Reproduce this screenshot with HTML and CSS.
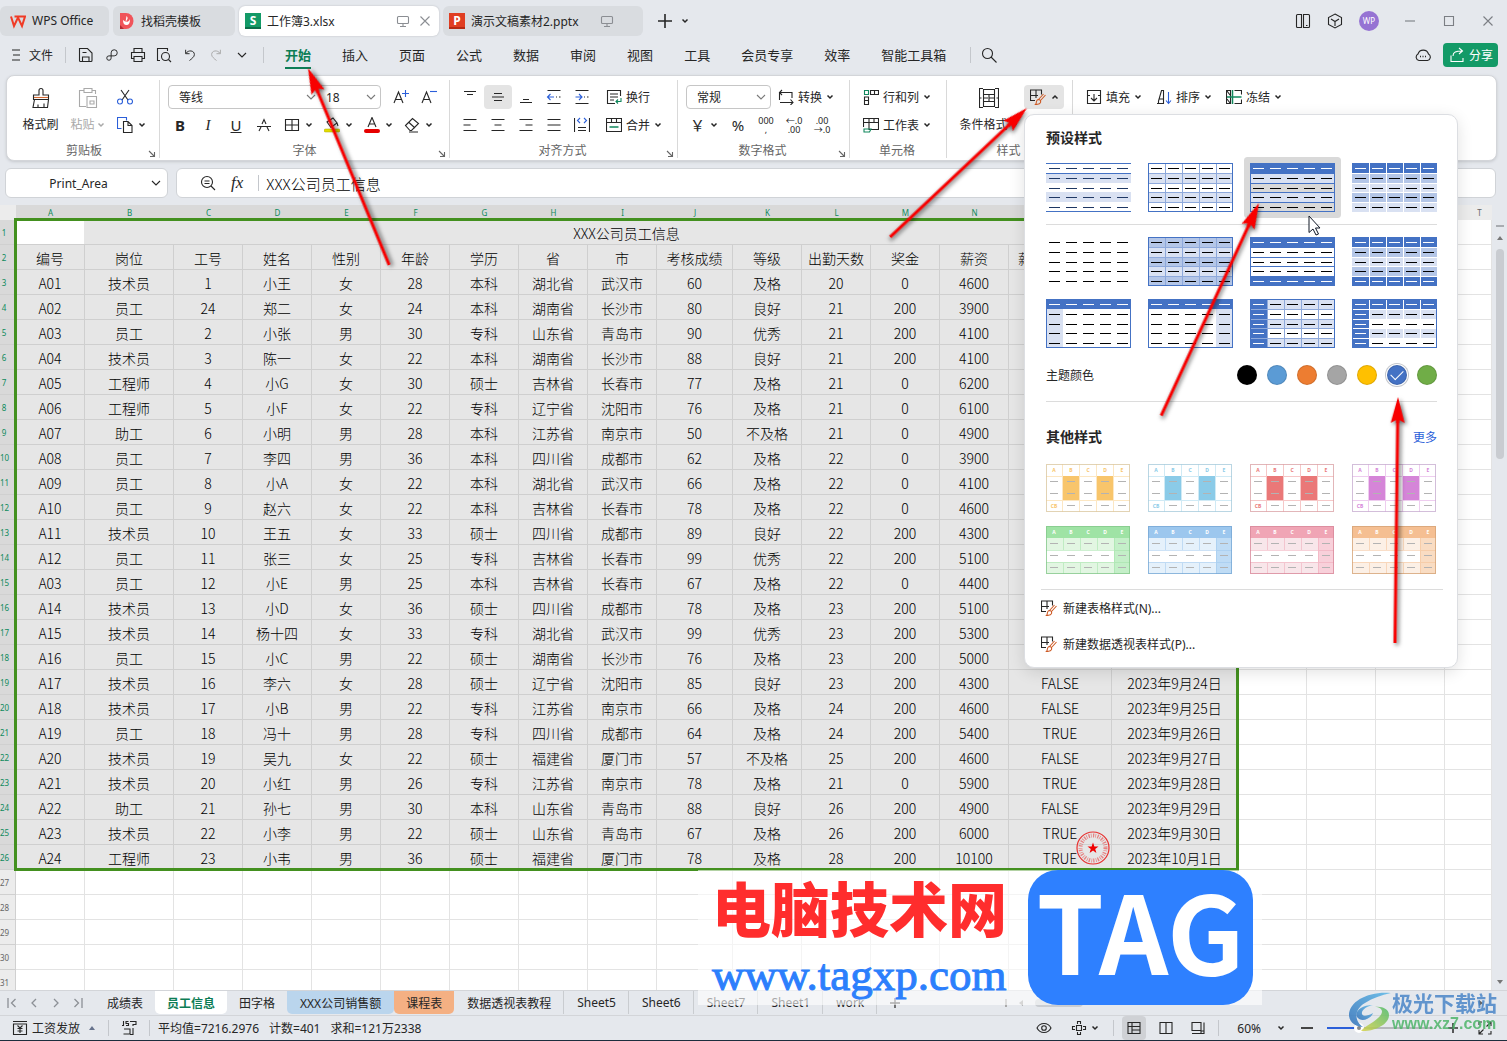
FILE: index.html
```
<!DOCTYPE html>
<html lang="zh-CN">
<head>
    <meta charset="UTF-8">
    <meta name="viewport" content="width=device-width, initial-scale=1.0">
    <title>工作簿3.xlsx</title>
    <link rel="stylesheet" href="styles.css">
</head>
<body>
    <!-- icon sprite -->
    <svg class="sprite" aria-hidden="true">
        <symbol id="caret" viewBox="0 0 8 8"><path d="M1.5 2.5L4 5L6.500 2.500" stroke-width="1.500"/></symbol>
        <symbol id="caret-up" viewBox="0 0 8 8"><path d="M1.500 5.500L4 3L6.500 5.500" stroke-width="1.500"/></symbol>
        <symbol id="chev" viewBox="0 0 10 10"><path d="M1 3L5 7L9 3"/></symbol>
        <symbol id="screen" viewBox="0 0 16 16"><path d="M3.500 3.500h9a1 1 0 0 1 1 1v5a1 1 0 0 1-1 1h-9a1 1 0 0 1-1-1v-5a1 1 0 0 1 1-1zM8 10.500v2.500M5 13.500h6"/></symbol>
        <symbol id="close" viewBox="0 0 16 16"><path d="M3.500 3.500l9 9M12.500 3.500l-9 9"/></symbol>
        <symbol id="plus" viewBox="0 0 16 16"><path d="M8 1v14M1 8h14" stroke-width="1.600"/></symbol>
        <symbol id="panel" viewBox="0 0 16 16"><path d="M6.500 1.500H2.500a1 1 0 0 0-1 1v11a1 1 0 0 0 1 1H6.500M6.500 1v14M8.500 1.500h5a1 1 0 0 1 1 1v11a1 1 0 0 1-1 1h-5zM11 12.500h1.500"/></symbol>
        <symbol id="cube" viewBox="0 0 16 16"><path d="M8 1L14.500 4.500V11.500L8 15L1.500 11.500V4.500zM4 6L8 8.500L12 6M8 8.500V13"/></symbol>
        <symbol id="burger" viewBox="0 0 16 16"><path d="M4 3h8M5 8h7M4 13h8"/></symbol>
        <symbol id="save" viewBox="0 0 16 16"><path d="M1.500 1.500h8l4.500 4.500v7.500a1 1 0 0 1-1 1H2.500a1 1 0 0 1-1-1zM4.500 14v-4h6.500v4M4.500 5.500h4"/></symbol>
        <symbol id="link" viewBox="0 0 16 16"><path d="M7 10.500V5.500a3.500 3.500 0 1 1 3.500 3.500H4.500a2.500 2.500 0 1 0 2.500 2.500z"/></symbol>
        <symbol id="print" viewBox="0 0 16 16"><path d="M4 5V1.500h8V5M4 11.500H1.500v-6h13v6H12M4 9.500h8v5H4z"/></symbol>
        <symbol id="preview" viewBox="0 0 16 16"><path d="M4 13.500H1.500v-12h10V4M12.500 12.500L15 15"/><circle cx="9.500" cy="9.500" r="4"/></symbol>
        <symbol id="undo" viewBox="0 0 16 16"><path d="M3 2v4.500h4.500M3.500 6C6 2 13 2.500 13 7.500c0 3-3 4-5.500 7"/></symbol>
        <symbol id="redo" viewBox="0 0 16 16"><path d="M13 2v4.500H8.500M12.500 6C10 2 3 2.500 3 7.500c0 3 3 4 5.500 7"/></symbol>
        <symbol id="search" viewBox="0 0 16 16"><circle cx="6.500" cy="6.500" r="5"/><path d="M10 10l5.500 5.500"/></symbol>
        <symbol id="cloud" viewBox="0 0 16 16"><path d="M4 13.500a3.500 3.500 0 0 1-1-6.500a5.500 5.500 0 0 1 10.500 0a3.500 3.500 0 0 1-1 6.500z"/><path d="M5 9.500h1M7.500 9.500h1M10 9.500h1" stroke-width="1.600"/></symbol>
        <symbol id="share" viewBox="0 0 16 16"><path d="M2 8.500v6h12v-3.500M4 9c0-4 3-5 9-5M10 1l3.500 3l-3.500 3"/></symbol>
        <symbol id="brush" viewBox="0 0 20 22"><path d="M8 8V3.500a2 2 0 0 1 4 0V8h5.500v4.500H2.500V8zM3.500 12.500L2 20.500h14.500l1-8M7 20.500v-3M13 20.500v-4"/><path d="M3 10.500h14" stroke="#d46a35"/></symbol>
        <symbol id="paste" viewBox="0 0 20 22"><path d="M6 3.500H1.500v16H8M14 3.500h3.500V7M6 1.500h8v4H6zM9 9.500h9.500v11H9zM12 14h4v3h-4z"/></symbol>
        <symbol id="cut" viewBox="0 0 16 16"><path d="M4 1l7 10M12 1L5 11"/><circle cx="3" cy="12.500" r="2.500" stroke="#2b5fd9"/><circle cx="13" cy="12.500" r="2.500" stroke="#2b5fd9"/></symbol>
        <symbol id="copy" viewBox="0 0 16 16"><path d="M4.500 11.500h-4v-11h9v3" stroke="#2b5fd9"/><path d="M6.500 4.500H11l4 4v7H6.500zM11 4.500v4h4"/></symbol>
        <symbol id="strike" viewBox="0 0 16 16"><path d="M1 9.500h14M3 14L5 10M13 14L11 10M6 7L8 2.500L10 7"/></symbol>
        <symbol id="border" viewBox="0 0 16 16"><path d="M1.500 2.500h13v11h-13zM8 2.500v11M1.500 8h13"/></symbol>
        <symbol id="bucket" viewBox="0 0 16 16"><path d="M3 5L9 1l4 5l-6 4.500zM13 6l1 3"/><rect x="0" y="12" width="16" height="3" rx="1.500" fill="#e3de00" stroke="#a8a400" stroke-width=".5"/></symbol>
        <symbol id="color" viewBox="0 0 16 16"><path d="M4 10L8 0.500L12 10M5.500 7h5"/><rect x="0" y="12" width="16" height="4" rx="2" fill="#e60000" stroke="none"/></symbol>
        <symbol id="eraser" viewBox="0 0 16 16"><path d="M1.500 8.500L8.500 1.500L14.500 6.500L7.500 13.500H6zM5 5.500l6 5.500M5 15h9"/></symbol>
        <symbol id="v-top" viewBox="0 0 16 16"><path d="M2 2.500h12M5 5.500h6"/></symbol>
        <symbol id="v-mid" viewBox="0 0 16 16"><path d="M4 4.500h8M2 8h12M4 11.500h8"/></symbol>
        <symbol id="v-bot" viewBox="0 0 16 16"><path d="M5 10.500h6M2 13.500h12"/></symbol>
        <symbol id="dec" viewBox="0 0 16 16"><path d="M1.500 1.500h13M1.500 14.500h13M10 8h1M13 8h1.500"/><path d="M1.500 8H8M4.500 5L1.500 8L4.500 11" stroke="#2b5fd9"/></symbol>
        <symbol id="inc" viewBox="0 0 16 16"><path d="M1.500 1.500h13M1.500 14.500h13M10 8h1M13 8h1.500"/><path d="M1.500 8H8M5 5l3 3l-3 3" stroke="#2b5fd9"/></symbol>
        <symbol id="a-left" viewBox="0 0 16 16"><path d="M1.500 2.500h13M1.500 8h7M1.500 13.500h13"/></symbol>
        <symbol id="a-center" viewBox="0 0 16 16"><path d="M1.500 2.500h13M4.500 8h7M1.500 13.500h13"/></symbol>
        <symbol id="a-right" viewBox="0 0 16 16"><path d="M1.500 2.500h13M7.500 8h7M1.500 13.500h13"/></symbol>
        <symbol id="a-just" viewBox="0 0 16 16"><path d="M1.500 2.500h13M1.500 8h13M1.500 13.500h13"/></symbol>
        <symbol id="spread" viewBox="0 0 16 16"><path d="M.5 1v14M15.500 1v14M4 10.500h8M4 13.500h8"/><path d="M6 1L3.500 3.500L6 6M10 1l2.500 2.500L10 6" stroke="#2b5fd9"/></symbol>
        <symbol id="wrap" viewBox="0 0 16 16"><path d="M9 14.500H1.500v-13h13V7M4 5h8M4 8h8M4 11h4"/><path d="M15 9v3.500h-4.500M12 10.500l-2 2l2 2" stroke="#11875d"/></symbol>
        <symbol id="merge" viewBox="0 0 16 16"><path d="M.5 1.500h15v13H.5zM.5 5.500h15M5.500 1.500v4M10.500 1.500v4"/><path d="M3.500 10h9" stroke="#11875d" stroke-width="1.500"/></symbol>
        <symbol id="convert" viewBox="0 0 16 16"><path d="M1.500 11V3.500H14V9M4 1L1.500 3.500L4 6M2 13.500h13M12.500 10.500l2.500 3l-2.500 2.500"/></symbol>
        <symbol id="rowcol" viewBox="0 0 16 16"><path d="M7.500 1.500h8v4h-8zM11.500 1.500v4M1.500 8h4v7.500h-4zM1.500 11.500h4"/><path d="M1.500 1.500h4v4h-4z" stroke="#11875d"/></symbol>
        <symbol id="sheet" viewBox="0 0 16 16"><path d="M5.500 12.500H15.500V1.500H.5V10M.5 5.500h15M6 1.500v11M11 1.500v4"/><path d="M1 12h7l-1.500 3H1z" stroke="#11875d"/></symbol>
        <symbol id="cond" viewBox="0 0 20 22"><path d="M4 1.500H.5v19H4M16 1.500h3.500v19H16M4.500 2.500h11v5h-11zM4.500 14.500h11v5h-11zM4.500 7.500v7M10 7.500v3.500h5.500M9 11h-4.500M10 11v3.500M15.500 7.500v7M.5 11h2M17.500 11h2"/></symbol>
        <symbol id="tstyle" viewBox="0 0 16 16"><path d="M5 11.500H.5V1h11v4.500M.5 6.500H8M6 1v8"/><path d="M15.500 6l-5 5.500M13.500 5l-5 5.500M8 10.500c2 0 3 1 2.500 3c-.5 1.500-3 2-5 2c1.500-1.500 0-4 2.500-5z" stroke="#cd5a25"/></symbol>
        <symbol id="fill" viewBox="0 0 16 16"><path d="M4 6.500H1.500v-5h13v5H12M1.500 6.500v8h13v-8M8 5v7M5 9l3 3l3-3"/></symbol>
        <symbol id="sort" viewBox="0 0 16 16"><path d="M2.500 14.500V12l3-10.500h2v13zM3 10h4M1 14.500h7"/><path d="M12.500 3v11M10 11.500l2.500 3l2.500-3" stroke="#2b5fd9"/></symbol>
        <symbol id="freeze" viewBox="0 0 16 16"><path d="M.5 1.500h4v13h-4zM1 2l3 4M1 10l3 4M8.500 1.500h7v4M8.500 14.500h7v-4"/><path d="M1 8h14.500M6.500 1v14" stroke="#11875d" stroke-width="1.500"/></symbol>
        <symbol id="launch" viewBox="0 0 8 8"><path d="M1 1l5 5M6.500 2v4.500H2"/></symbol>
        <symbol id="zoomfx" viewBox="0 0 16 16"><circle cx="7" cy="7" r="5.500"/><path d="M4.500 6h5M4.500 8.500h5M11 11l4 4"/></symbol>
        <symbol id="eye" viewBox="0 0 16 16"><path d="M1 8c3-6 11-6 14 0c-3 6-11 6-14 0z"/><circle cx="8" cy="8" r="2.300"/></symbol>
        <symbol id="target" viewBox="0 0 16 16"><path d="M5.500 5.500h5v5h-5zM6.500 4V1.500h3V4M6.500 12v2.500h3V12M4 6.500H1.500v3H4M12 6.500h2.500v3H12"/></symbol>
        <symbol id="normal" viewBox="0 0 16 16"><path d="M2 2.500h12v11H2zM2 6.500h12M6 2.500v11M6 10h8"/></symbol>
        <symbol id="book" viewBox="0 0 16 16"><path d="M2 2.500h12v11H2zM8 2.500v11"/></symbol>
        <symbol id="pages" viewBox="0 0 16 16"><path d="M2 2.500h9v8H2zM14 2.500v11H2M11 13V11h3"/></symbol>
        <symbol id="pay" viewBox="0 0 16 16"><path d="M1 1.500h14M1.500 4h13v10.500h-13zM5.500 5.500L8 8l2.500-2.500M8 8v5M5.500 8.500h5M5.500 11h5"/></symbol>
        <symbol id="macro" viewBox="0 0 16 16"><path d="M2.500 1v4.500H1M7.500 1.500H5v2h2.500v2H5M9 1.500h6v3H12V6M3 9h6v5H2.500M12 8v6.500H9"/></symbol>
        <symbol id="full" viewBox="0 0 16 16"><path d="M9.500 6.500L14 2M10 2h4v4M6.500 9.500L2 14M2 10v4h4M2 5V2h3M11 14h3v-3"/></symbol>
    </svg>

    <div class="app">
        <header class="titlebar">
            <button class="file-tab home-tab">
                <svg class="logo" viewBox="0 0 16 16"><path d="M1 3.500L4 13L8 4.500L12 13L15 3.500H4.500" stroke="#f03b26" stroke-width="2"/></svg>
                WPS Office
            </button>
            <button class="file-tab docer-tab">
                <svg class="logo" viewBox="0 0 16 16"><path d="M1 0h6a7.500 8 0 0 1 0 16H1z" fill="#f0545a" stroke="none"/><path d="M1 12l4 4H1z" fill="#b32b34" stroke="none"/><path d="M7.500 3c3 3-1 4 0 6c1 0 3-1 3.500-3c0 4-1 6-3.500 6S4 10 4 7c1 1 2 1 2.500 2" fill="#fff" stroke="none"/></svg>
                找稻壳模板
            </button>
            <div class="file-tab doc-tab current">
                <span class="badge sheet-badge">S</span>
                <span>工作簿3.xlsx</span>
                <svg class="ico end"><use href="#screen"/></svg>
                <button class="bare" aria-label="关闭"><svg class="ico"><use href="#close"/></svg></button>
            </div>
            <div class="file-tab doc-tab">
                <span class="badge ppt-badge">P</span>
                <span>演示文稿素材2.pptx</span>
                <svg class="ico end"><use href="#screen"/></svg>
                <span class="ico"></span>
            </div>
            <button class="bare new-tab" aria-label="新建"><svg class="ico"><use href="#plus"/></svg><svg class="caret"><use href="#caret"/></svg></button>
            <div class="window-tools">
                <button class="bare" aria-label="侧栏"><svg class="ico"><use href="#panel"/></svg></button>
                <button class="bare" aria-label="应用"><svg class="ico"><use href="#cube"/></svg></button>
                <span class="avatar">WP</span>
                <button class="win-btn" aria-label="最小化"><svg class="ico" viewBox="0 0 16 16"><path d="M3 8h10"/></svg></button>
                <button class="win-btn" aria-label="最大化"><svg class="ico" viewBox="0 0 16 16"><path d="M3.500 3.500h9v9h-9z"/></svg></button>
                <button class="win-btn" aria-label="退出"><svg class="ico"><use href="#close"/></svg></button>
            </div>
        </header>

        <nav class="menubar">
            <button class="bare file-menu"><svg class="ico"><use href="#burger"/></svg>文件</button>
            <span class="bar"></span>
            <div class="quick">
                <button class="bare" aria-label="保存"><svg class="ico"><use href="#save"/></svg></button>
                <button class="bare" aria-label="链接"><svg class="ico small"><use href="#link"/></svg></button>
                <button class="bare" aria-label="打印"><svg class="ico"><use href="#print"/></svg></button>
                <button class="bare" aria-label="预览"><svg class="ico"><use href="#preview"/></svg></button>
                <button class="bare" aria-label="撤销"><svg class="ico small"><use href="#undo"/></svg></button>
                <button class="bare off" aria-label="恢复"><svg class="ico small"><use href="#redo"/></svg></button>
                <button class="bare" aria-label="更多命令"><svg class="chev"><use href="#chev"/></svg></button>
            </div>
            <span class="bar"></span>
            <div class="menu-tabs">
                <a href="#" class="active">开始</a>
                <a href="#">插入</a>
                <a href="#">页面</a>
                <a href="#">公式</a>
                <a href="#">数据</a>
                <a href="#">审阅</a>
                <a href="#">视图</a>
                <a href="#">工具</a>
                <a href="#">会员专享</a>
                <a href="#">效率</a>
                <a href="#">智能工具箱</a>
            </div>
            <span class="bar"></span>
            <button class="bare find" aria-label="搜索"><svg class="ico"><use href="#search"/></svg></button>
            <button class="bare cloud" aria-label="云"><svg class="ico"><use href="#cloud"/></svg></button>
            <button class="share"><svg class="ico"><use href="#share"/></svg>分享</button>
        </nav>

        <section class="ribbon">
            <div class="group clipboard">
                <div class="group-body">
                    <button class="big"><svg class="ico-lg"><use href="#brush"/></svg><span>格式刷</span></button>
                    <button class="big off"><svg class="ico-lg"><use href="#paste"/></svg><span>粘贴<svg class="caret"><use href="#caret"/></svg></span></button>
                    <div class="rows">
                        <div class="row"><button class="slot" aria-label="剪切"><svg class="ico"><use href="#cut"/></svg></button></div>
                        <div class="row"><button class="slot wide" aria-label="复制"><svg class="ico"><use href="#copy"/></svg><svg class="caret"><use href="#caret"/></svg></button></div>
                    </div>
                </div>
                <div class="group-name">剪贴板</div>
                <svg class="launch"><use href="#launch"/></svg>
            </div>

            <div class="group font">
                <div class="rows">
                    <div class="row">
                        <div class="combo">
                            <select class="font-name" aria-label="字体"><option>等线</option></select>
                            <svg class="chev"><use href="#chev"/></svg>
                            <select class="font-size" aria-label="字号"><option>18</option></select>
                            <svg class="chev"><use href="#chev"/></svg>
                        </div>
                        <button class="slot first" aria-label="增大字号"><svg class="ico" viewBox="0 0 16 16"><path d="M1 14L5.500 3L10 14M2.500 10.500h6"/><path d="M12.500 1v7M9 4.500h7" stroke="#2b5fd9"/></svg></button>
                        <button class="slot" aria-label="减小字号"><svg class="ico" viewBox="0 0 16 16"><path d="M1 14L5.500 3L10 14M2.500 10.500h6"/><path d="M9 2.500h7" stroke="#2b5fd9"/></svg></button>
                    </div>
                    <div class="row">
                        <button class="slot glyph"><b>B</b></button>
                        <button class="slot glyph"><i>I</i></button>
                        <button class="slot glyph"><u>U</u></button>
                        <button class="slot" aria-label="删除线"><svg class="ico"><use href="#strike"/></svg></button>
                        <button class="slot wide" aria-label="边框"><svg class="ico"><use href="#border"/></svg><svg class="caret"><use href="#caret"/></svg></button>
                        <button class="slot wide" aria-label="填充色"><svg class="ico"><use href="#bucket"/></svg><svg class="caret"><use href="#caret"/></svg></button>
                        <button class="slot wide" aria-label="字体颜色"><svg class="ico"><use href="#color"/></svg><svg class="caret"><use href="#caret"/></svg></button>
                        <button class="slot wide" aria-label="清除"><svg class="ico"><use href="#eraser"/></svg><svg class="caret"><use href="#caret"/></svg></button>
                    </div>
                </div>
                <div class="group-name">字体</div>
                <svg class="launch"><use href="#launch"/></svg>
            </div>

            <div class="group">
                <div class="rows">
                    <div class="row">
                        <button class="slot" aria-label="顶端对齐"><svg class="ico"><use href="#v-top"/></svg></button>
                        <button class="slot pressed" aria-label="垂直居中"><svg class="ico"><use href="#v-mid"/></svg></button>
                        <button class="slot" aria-label="底端对齐"><svg class="ico"><use href="#v-bot"/></svg></button>
                        <button class="slot" aria-label="减少缩进"><svg class="ico"><use href="#dec"/></svg></button>
                        <button class="slot" aria-label="增加缩进"><svg class="ico"><use href="#inc"/></svg></button>
                        <button class="tbtn"><svg class="ico"><use href="#wrap"/></svg>换行</button>
                    </div>
                    <div class="row">
                        <button class="slot" aria-label="左对齐"><svg class="ico"><use href="#a-left"/></svg></button>
                        <button class="slot" aria-label="居中"><svg class="ico"><use href="#a-center"/></svg></button>
                        <button class="slot" aria-label="右对齐"><svg class="ico"><use href="#a-right"/></svg></button>
                        <button class="slot" aria-label="两端对齐"><svg class="ico"><use href="#a-just"/></svg></button>
                        <button class="slot" aria-label="分散对齐"><svg class="ico"><use href="#spread"/></svg></button>
                        <button class="tbtn"><svg class="ico"><use href="#merge"/></svg>合并<svg class="caret"><use href="#caret"/></svg></button>
                    </div>
                </div>
                <div class="group-name">对齐方式</div>
                <svg class="launch"><use href="#launch"/></svg>
            </div>

            <div class="group">
                <div class="rows">
                    <div class="row">
                        <div class="combo">
                            <select class="num-format" aria-label="数字格式"><option>常规</option></select>
                            <svg class="chev"><use href="#chev"/></svg>
                        </div>
                        <button class="tbtn tight"><svg class="ico"><use href="#convert"/></svg>转换<svg class="caret"><use href="#caret"/></svg></button>
                    </div>
                    <div class="row">
                        <button class="slot wide glyph">￥<svg class="caret"><use href="#caret"/></svg></button>
                        <button class="slot glyph">%</button>
                        <button class="slot tiny"><span>000</span><span>,</span></button>
                        <button class="slot tiny"><span>←.0</span><span>.00</span></button>
                        <button class="slot tiny"><span>.00</span><span>→.0</span></button>
                    </div>
                </div>
                <div class="group-name">数字格式</div>
                <svg class="launch"><use href="#launch"/></svg>
            </div>

            <div class="group">
                <div class="rows">
                    <div class="row"><button class="tbtn tight"><svg class="ico"><use href="#rowcol"/></svg>行和列<svg class="caret"><use href="#caret"/></svg></button></div>
                    <div class="row"><button class="tbtn tight"><svg class="ico"><use href="#sheet"/></svg>工作表<svg class="caret"><use href="#caret"/></svg></button></div>
                </div>
                <div class="group-name">单元格</div>
            </div>

            <div class="group">
                <div class="group-body">
                    <button class="big cond"><svg class="ico-lg"><use href="#cond"/></svg><span>条件格式<svg class="caret"><use href="#caret"/></svg></span></button>
                    <div class="style-drop">
                        <button class="slot wide pressed" aria-label="表格样式"><svg class="ico"><use href="#tstyle"/></svg><svg class="caret"><use href="#caret-up"/></svg></button>

                        <div class="popup">
                            <h3>预设样式</h3>
                            <div class="thumbs" id="recent-styles"></div>
                            <hr>
                            <div class="thumbs" id="preset-styles"></div>
                            <div class="theme-row">
                                <span>主题颜色</span>
                                <div class="swatches">
                                    <input type="radio" name="theme" class="c-black" aria-label="黑色">
                                    <input type="radio" name="theme" class="c-sky" aria-label="浅蓝">
                                    <input type="radio" name="theme" class="c-orange" aria-label="橙色">
                                    <input type="radio" name="theme" class="c-gray" aria-label="灰色">
                                    <input type="radio" name="theme" class="c-gold" aria-label="金色">
                                    <input type="radio" name="theme" class="c-blue" aria-label="蓝色" checked>
                                    <input type="radio" name="theme" class="c-green" aria-label="绿色">
                                </div>
                            </div>
                            <hr>
                            <div class="popup-head">
                                <h3>其他样式</h3>
                                <a href="#">更多</a>
                            </div>
                            <div class="thumbs" id="other-styles"></div>
                            <hr class="wide-line">
                            <button class="popup-item"><svg class="ico"><use href="#tstyle"/></svg>新建表格样式(N)...</button>
                            <button class="popup-item"><svg class="ico"><use href="#tstyle"/></svg>新建数据透视表样式(P)...</button>
                        </div>
                    </div>
                </div>
                <div class="group-name">样式</div>
            </div>

            <div class="group last">
                <div class="rows">
                    <div class="row">
                        <button class="tbtn tight"><svg class="ico"><use href="#fill"/></svg>填充<svg class="caret"><use href="#caret"/></svg></button>
                        <button class="tbtn tight"><svg class="ico"><use href="#sort"/></svg>排序<svg class="caret"><use href="#caret"/></svg></button>
                        <button class="tbtn tight"><svg class="ico"><use href="#freeze"/></svg>冻结<svg class="caret"><use href="#caret"/></svg></button>
                    </div>
                </div>
            </div>
        </section>

        <div class="formula-bar">
            <div class="box name-box">
                <input type="text" value="Print_Area" aria-label="名称框">
                <svg class="chev"><use href="#chev"/></svg>
            </div>
            <div class="box formula-box">
                <svg class="ico"><use href="#zoomfx"/></svg>
                <i class="fx">fx</i>
                <span class="bar"></span>
                <input type="text" value="XXX公司员工信息" aria-label="编辑栏">
            </div>
        </div>

        <main class="workspace">
            <div class="sheet">
                <table class="grid">
                    <colgroup id="cols"></colgroup>
                    <thead><tr id="letters"></tr></thead>
                    <tbody id="cells"></tbody>
                </table>
                <div class="selection"></div>
                <svg class="stamp" viewBox="0 0 34 34">
                    <circle cx="17" cy="17" r="16" stroke="#e8302f" stroke-width="1.200"/>
                    <circle cx="17" cy="17" r="12.500" stroke="#e8302f" stroke-width="4" stroke-dasharray="1.300 1.100 .700 1.400" opacity=".55"/>
                    <path d="M17 11.500l1.400 4h4.100l-3.300 2.500l1.200 4l-3.400-2.400l-3.400 2.400l1.200-4l-3.300-2.500h4.100z" fill="#f00000" stroke="none"/>
                </svg>
            </div>
            <div class="vscroll">
                <span class="split"></span>
                <span class="tri up"></span>
                <span class="thumb-bar"></span>
                <span class="tri down"></span>
            </div>
        </main>

        <div class="sheet-tabs">
            <div class="sheet-nav">
                <svg class="nav-ico" viewBox="0 0 12 12"><path d="M2 1v10M9.500 2L5.500 6L9.500 10"/></svg>
                <svg class="nav-ico" viewBox="0 0 12 12"><path d="M8 2L4 6L8 10"/></svg>
                <svg class="nav-ico" viewBox="0 0 12 12"><path d="M4 2L8 6L4 10"/></svg>
                <svg class="nav-ico" viewBox="0 0 12 12"><path d="M10 1v10M2.500 2L6.500 6L2.500 10"/></svg>
            </div>
            <button>成绩表</button>
            <button class="open">员工信息</button>
            <button>田字格</button>
            <button class="blue">XXX公司销售额</button>
            <button class="peach">课程表</button>
            <button class="lined">数据透视表教程</button>
            <button class="lined">Sheet5</button>
            <button class="lined">Sheet6</button>
            <button class="lined">Sheet7</button>
            <button class="lined">Sheet1</button>
            <button class="lined">work</button>
            <button class="add" aria-label="新建工作表"><svg class="nav-ico dark" viewBox="0 0 12 12"><path d="M6 1v10M1 6h10"/></svg></button>
            <div class="hscroll"><span class="grip"></span><span class="tri left"></span><span class="hbar"></span><span class="tri right"></span></div>
        </div>

        <footer class="statusbar">
            <button class="bare pay"><svg class="ico"><use href="#pay"/></svg>工资发放<span class="tri up"></span></button>
            <span class="bar"></span>
            <svg class="ico macro"><use href="#macro"/></svg>
            <span class="bar"></span>
            <span class="stats"><span>平均值=7216.2976</span><span>计数=401</span><span>求和=121万2338</span></span>
            <div class="views">
                <button class="bare view eye" aria-label="护眼"><svg class="ico"><use href="#eye"/></svg></button>
                <button class="bare view aim" aria-label="阅读"><svg class="ico"><use href="#target"/></svg><svg class="caret"><use href="#caret"/></svg></button>
                <span class="bar"></span>
                <button class="bare view on" aria-label="普通视图"><svg class="ico"><use href="#normal"/></svg></button>
                <button class="bare view" aria-label="分页预览"><svg class="ico"><use href="#book"/></svg></button>
                <button class="bare view" aria-label="页面布局"><svg class="ico"><use href="#pages"/></svg></button>
                <span class="bar"></span>
                <button class="bare zoom">60%<svg class="caret"><use href="#caret"/></svg></button>
                <button class="bare" aria-label="缩小"><svg class="nav-ico dark" viewBox="0 0 12 12"><path d="M0 6h12" stroke-width="1.800"/></svg></button>
                <input type="range" min="0" max="100" value="28" aria-label="缩放">
                <button class="bare" aria-label="放大"><svg class="nav-ico dark" viewBox="0 0 12 12"><path d="M6 1v10M1 6h10" stroke-width="1.600"/></svg></button>
                <button class="bare full" aria-label="全屏"><svg class="ico"><use href="#full"/></svg></button>
            </div>
        </footer>
    </div>

    <!-- site marks -->
    <div class="tag-mark">
        <div class="tag-text">
            <div class="tag-cn">电脑技术网</div>
            <div class="tag-url">www.tagxp.com</div>
        </div>
        <div class="tag-logo">TAG</div>
    </div>
    <div class="xz-mark">
        <svg class="xz-logo" viewBox="0 0 42 40">
            <defs>
                <linearGradient id="swirlA" x1="0" y1="1" x2="1" y2="0"><stop offset="0" stop-color="#2f6fb8"/><stop offset="1" stop-color="#5bb8e8"/></linearGradient>
                <linearGradient id="swirlB" x1="0" y1="1" x2="1" y2="0"><stop offset="0" stop-color="#d8d34a"/><stop offset="1" stop-color="#4dbb6a"/></linearGradient>
            </defs>
            <path d="M42 1C20-1 0 9 0 23c0 8 8 12 14 12C6 30 4 18 16 11C24 6 32 3 42 1z" fill="url(#swirlA)" stroke="none"/>
            <path d="M24 13c-12 0-19 7-16 12c4 6 14 2 16-4c-5 3-10 4-11 1c-1-4 5-8 11-9z" fill="url(#swirlA)" stroke="none"/>
            <path d="M26 15c7 0 10 5 3 11C24 31 16 34 12 39C24 40 40 33 40 23c0-6-7-9-14-8z" fill="url(#swirlB)" stroke="none"/>
        </svg>
        <div>
            <div class="xz-cn">极光下载站</div>
            <div class="xz-url">www.xz7.com</div>
        </div>
    </div>

    <!-- pointers drawn over the window -->
    <svg class="arrows" aria-hidden="true">
        <defs><path id="head" d="M0 0L7 26L1.500 23V26H-1.500V23L-7 26z"/></defs>
        <g transform="translate(308 68) rotate(-22.400)"><use href="#head"/><path d="M0 22V213"/></g>
        <g transform="translate(1027 108) rotate(46.700)"><use href="#head"/><path d="M0 22V188"/></g>
        <g transform="translate(1259 203) rotate(24.700)"><use href="#head"/><path d="M0 22V234"/></g>
        <g transform="translate(1398 397) rotate(.7)"><use href="#head"/><path d="M0 22V246"/></g>
        <path class="mouse" d="M1309 216V232.500L1313 229L1316 235L1318.500 234L1315.500 228H1320z"/>
    </svg>

    <script src="script.js"></script>
</body>
</html>
```

FILE: styles.css
```
* {
    box-sizing: border-box;
}

body {
    margin: 0;
    font-family: "Noto Sans", "Noto Sans CJK SC", sans-serif;
    font-size: 12px;
    color: #262626;
    background-color: #e5e8ed;
    overflow: hidden;
}

button,
input,
select {
    font: inherit;
    color: inherit;
}

button {
    border: none;
    background: none;
    padding: 0;
    display: flex;
    align-items: center;
    white-space: nowrap;
}

svg {
    fill: none;
    stroke: currentColor;
    stroke-width: 1.1;
    flex: none;
}

.sprite {
    position: absolute;
    width: 0;
    height: 0;
}

.ico {
    width: 16px;
    height: 16px;
}

.ico.small {
    width: 14px;
    height: 14px;
}

.ico-lg {
    width: 20px;
    height: 22px;
}

.caret {
    width: 8px;
    height: 8px;
}

.chev {
    width: 10px;
    height: 10px;
}

.bar {
    width: 1px;
    height: 16px;
    background-color: #c4c7cc;
}

.off {
    color: #a9a9a9;
}

.app {
    height: 100vh;
    display: flex;
    flex-direction: column;
    border-bottom: 1px solid #1d2d3d;
}

/* title bar */
.titlebar {
    height: 41px;
    flex: none;
    display: flex;
    align-items: center;
    gap: 4px;
}

.file-tab {
    height: 30px;
    display: flex;
    align-items: center;
    gap: 6px;
    padding: 0 6px;
    border-radius: 6px;
    background-color: #d9dce0;
}

.home-tab {
    width: 109px;
    padding-left: 10px;
}

.docer-tab {
    width: 122px;
}

.doc-tab {
    width: 200px;
}

.current {
    background-color: #fff;
    box-shadow: 0 0 2px #b5b8bd;
}

.logo {
    width: 16px;
    height: 16px;
}

.badge {
    width: 16px;
    height: 16px;
    line-height: 15px;
    text-align: center;
    font-size: 12px;
    font-weight: bold;
    color: #fff;
}

.sheet-badge {
    background-color: #139a67;
    border-bottom: 2px solid #0a6e49;
}

.ppt-badge {
    background-color: #e03e22;
    border-bottom: 2px solid #b62a13;
}

.end {
    margin-left: auto;
    color: #8b8e93;
}

.current .bare {
    color: #8b8e93;
}

.new-tab {
    gap: 8px;
    padding-left: 10px;
}

.window-tools {
    margin-left: auto;
    display: flex;
    align-items: center;
    gap: 16px;
    padding-right: 11px;
}

.avatar {
    width: 20px;
    height: 20px;
    line-height: 20px;
    border-radius: 50%;
    background-color: #9673d3;
    color: #fff;
    font-size: 8px;
    text-align: center;
}

.win-btn {
    color: #7b7e84;
    padding-left: 7px;
}

/* menu bar */
.menubar {
    height: 34px;
    flex: none;
    display: flex;
    align-items: center;
    padding: 0 9px 6px 8px;
}

.file-menu {
    gap: 5px;
    margin-right: 12px;
}

.quick {
    display: flex;
    padding: 0 8px 0 7px;
}

.quick button {
    width: 26px;
    justify-content: center;
}

.menu-tabs {
    display: flex;
    gap: 31px;
    padding: 0 24px 0 21px;
    font-size: 13px;
}

.menu-tabs a {
    color: #262626;
    text-decoration: none;
    line-height: 24px;
    border-bottom: 2px solid transparent;
    padding-top: 2px;
}

.menu-tabs .active {
    color: #0d7d55;
    font-weight: bold;
    border-color: #0d7d55;
}

.find {
    margin-left: 10px;
}

.cloud {
    margin-left: auto;
    margin-right: 12px;
}

.share {
    height: 24px;
    gap: 4px;
    padding: 0 5px 0 6px;
    border-radius: 4px;
    background-color: #139a67;
    color: #fff;
}

/* ribbon */
.ribbon {
    height: 86px;
    flex: none;
    display: flex;
    margin: 0 10px 0 6px;
    padding-top: 4px;
    background-color: #fff;
    border: 1px solid #d3d5d9;
    border-radius: 8px;
    box-shadow: 0 1px 3px #c5c8cd;
}

.group {
    position: relative;
    height: 78px;
    padding: 5px 8px 0 6px;
    border-right: 1px solid #d9d9d9;
}

.group.clipboard {
    padding-left: 10px;
}

.group.font {
    padding-right: 6px;
}

.group.last {
    border-right: none;
}

.group-body {
    display: flex;
    height: 52px;
}

.rows {
    display: flex;
    flex-direction: column;
    gap: 4px;
    height: 52px;
}

.row {
    display: flex;
    align-items: center;
    height: 24px;
}

.group-name {
    margin-top: 6px;
    line-height: 16px;
    text-align: center;
    color: #666;
}

.launch {
    position: absolute;
    right: 3px;
    bottom: 0;
    width: 8px;
    height: 8px;
    color: #666;
}

.slot {
    width: 28px;
    height: 24px;
    justify-content: center;
}

.wide {
    width: 40px;
    gap: 5px;
    justify-content: flex-start;
    padding-left: 6px;
}

.pressed {
    background-color: #e4e4e4;
    border-radius: 4px;
}

.first {
    margin-left: 6px;
}

.glyph {
    font-size: 15px;
    line-height: 24px;
}

.glyph i {
    font-family: "Liberation Serif", serif;
}

.tiny {
    flex-direction: column;
    font-size: 9px;
    line-height: 9px;
}

.tbtn {
    height: 24px;
    gap: 4px;
    margin-left: 3px;
    padding: 0 7px;
}

.tight {
    margin-left: 0;
}

.big {
    width: 47px;
    flex-direction: column;
    padding-top: 2px;
}

.big span {
    display: flex;
    align-items: center;
    gap: 2px;
    margin-top: 7px;
    line-height: 18px;
}

.cond {
    width: 71px;
}

.combo {
    display: flex;
    align-items: center;
    height: 24px;
    margin-left: 2px;
    padding-right: 4px;
    border: 1px solid #c6c6c6;
    border-radius: 4px;
}

.combo select {
    appearance: none;
    border: none;
    background: none;
    padding: 0 0 0 10px;
}

.combo .chev {
    color: #7a7a7a;
}

.font-name {
    width: 137px;
}

.font-size {
    width: 50px;
}

.num-format {
    width: 69px;
}

/* table style popup */
.style-drop {
    position: relative;
}

.popup {
    position: absolute;
    top: 29px;
    left: 0;
    z-index: 10;
    width: 434px;
    padding: 13px 20px 5px 21px;
    background-color: #fff;
    border: 1px solid #dcdee2;
    border-radius: 10px;
    box-shadow: 0 4px 16px rgba(0, 0, 0, 0.12);
}

.popup h3 {
    margin: 0;
    font-size: 14px;
    line-height: 20px;
}

.popup hr {
    height: 1px;
    margin: 12px 0;
    border: none;
    background-color: #dcdcdc;
}

.thumbs {
    display: grid;
    grid-template-columns: repeat(4, 85px);
    justify-content: space-between;
    row-gap: 13px;
}

.popup h3 + .thumbs {
    margin-top: 15px;
}

.thumb svg {
    display: block;
    width: 85px;
    height: 49px;
    stroke: none;
    shape-rendering: crispEdges;
}

.thumb.chosen {
    background-color: #d9d9d9;
    border-radius: 1px;
    box-shadow: 0 0 0 6px #d9d9d9;
}

.thumb text {
    font-size: 5px;
    font-weight: bold;
    text-anchor: middle;
}

.theme-row {
    display: flex;
    align-items: center;
    justify-content: space-between;
    margin: 17px 0 16px;
}

.swatches {
    display: flex;
    gap: 10px;
}

.swatches input {
    appearance: none;
    width: 20px;
    height: 20px;
    margin: 0;
    border-radius: 50%;
    border: 1px solid rgba(0, 0, 0, 0.12);
}

.swatches input:checked {
    box-shadow: 0 0 0 1px #fff, 0 0 0 2px #c4c7cc;
}

.swatches input:checked::after {
    content: "";
    display: block;
    width: 11px;
    height: 6px;
    margin: 4px 0 0 3px;
    border-left: 1px solid #fff;
    border-bottom: 1px solid #fff;
    transform: rotate(-45deg);
}

.c-black { background-color: #000; }
.c-sky { background-color: #5b9bd5; }
.c-orange { background-color: #ed7d31; }
.c-gray { background-color: #a5a5a5; }
.c-gold { background-color: #ffc000; }
.c-blue { background-color: #4472c4; }
.c-green { background-color: #70ad47; }

.popup-head {
    display: flex;
    justify-content: space-between;
    align-items: center;
    margin: 25px 0 17px;
}

.popup-head a {
    color: #2b5fd9;
    text-decoration: none;
}

.popup .wide-line {
    margin: 14px -6px 0 -5px;
}

.popup-item {
    height: 36px;
    gap: 6px;
    margin-left: -5px;
}

/* formula bar */
.formula-bar {
    display: flex;
    flex: none;
    gap: 8px;
    height: 44px;
    padding: 7px 11px 7px 5px;
}

.box {
    display: flex;
    align-items: center;
    background-color: #fff;
    border: 1px solid #d0d3d7;
    border-radius: 6px;
}

.box input {
    border: none;
    outline: none;
    background: none;
    padding: 0;
    min-width: 0;
}

.name-box {
    width: 163px;
    padding-right: 6px;
}

.name-box input {
    flex: 1;
    text-align: center;
}

.formula-box {
    flex: 1;
    gap: 15px;
    padding-left: 23px;
}

.formula-box .bar {
    margin-right: -8px;
}

.fx {
    font-family: "Liberation Serif", serif;
    font-size: 17px;
}

.formula-box input {
    flex: 1;
    font-family: "Noto Sans CJK SC", sans-serif;
    font-size: 15px;
    font-weight: 300;
    color: #000;
}

/* grid */
.workspace {
    flex: 1;
    min-height: 0;
    display: flex;
}

.sheet {
    flex: 1;
    position: relative;
    overflow: hidden;
    background-color: #fff;
}

.grid {
    width: 100%;
    table-layout: fixed;
    border-spacing: 0;
}

.grid th,
.grid td {
    padding: 0;
    overflow: hidden;
    white-space: nowrap;
    text-align: center;
}

.grid thead th {
    height: 15px;
    line-height: 15px;
    font-size: 8px;
    font-weight: normal;
    background-color: #ececec;
    color: #666;
}

.grid thead th:last-child {
    padding-left: 22px;
}

.grid tbody th {
    height: 25px;
    padding-right: 7px;
    font-size: 8px;
    font-weight: normal;
    color: #666;
    background-color: #ececec;
    border-right: 1px solid #d0d0d0;
    border-bottom: 1px solid #d0d0d0;
    overflow: visible;
}

.grid thead .in,
.grid tbody th.in {
    background-color: #d9d9d9;
    color: #0d8a5c;
}

.grid td {
    height: 25px;
    padding-top: 3px;
    line-height: 21px;
    font-family: "Noto Sans CJK SC", sans-serif;
    font-size: 14px;
    font-weight: 300;
    color: #000;
    border-right: 1px solid #e3e3e3;
    border-bottom: 1px solid #e3e3e3;
}

.grid td.in {
    background-color: #e6e6e6;
    border-color: #cfcfcf;
}

.grid td.heading {
    background-image: linear-gradient(to right, #fff 68px, #e6e6e6 68px);
}

.selection {
    position: absolute;
    left: 14px;
    top: 13px;
    width: 1225px;
    height: 653px;
    border: 3px solid #43901f;
}

.stamp {
    position: absolute;
    left: 1076px;
    top: 626px;
    width: 34px;
    height: 34px;
}

.vscroll {
    width: 15px;
    display: flex;
    flex-direction: column;
    align-items: center;
    padding: 20px 0 6px;
}

.split {
    width: 8px;
    height: 2px;
    background-color: #a9acb1;
}

.tri {
    width: 0;
    height: 0;
    border: 3px solid transparent;
}

.tri.up {
    border-bottom: 4px solid #777;
    border-top: none;
}

.tri.down {
    margin-top: auto;
    border-top: 4px solid #777;
    border-bottom: none;
}

.tri.left {
    border-right: 4px solid #999;
    border-left: none;
}

.tri.right {
    margin-left: auto;
    border-left: 4px solid #666;
    border-right: none;
}

.vscroll .up {
    margin: 9px 0;
}

.thumb-bar {
    width: 8px;
    height: 210px;
    border-radius: 4px;
    background-color: #c9ccd1;
}

/* sheet tabs */
.sheet-tabs {
    display: flex;
    flex: none;
    height: 26px;
    padding-left: 6px;
    border-top: 1px solid #d3d5d9;
    border-bottom: 1px solid #d3d5d9;
}

.nav-ico {
    width: 12px;
    height: 12px;
    color: #8c9096;
    stroke-width: 1.3;
}

.nav-ico.dark {
    color: #333;
}

.sheet-nav {
    display: flex;
    align-items: center;
    gap: 10px;
    margin-right: 11px;
}

.sheet-tabs button {
    height: 23px;
    padding: 0 12px;
}

.sheet-tabs .open {
    background-color: #fff;
    color: #0d7d55;
    font-weight: bold;
    border-radius: 0 0 5px 5px;
}

.sheet-tabs .blue {
    padding: 0 13px;
    background-color: #bad5ed;
    border-radius: 0 0 5px 5px;
}

.sheet-tabs .peach {
    background-color: #f4b083;
    border-radius: 0 0 5px 5px;
}

.sheet-tabs .lined {
    padding-left: 13px;
    border-right: 1px solid #c9ccd0;
}

.hscroll {
    flex: 1;
    display: flex;
    align-items: center;
    gap: 12px;
    margin-left: 92px;
    padding-right: 24px;
}

.grip {
    width: 2px;
    height: 8px;
    background-color: #aaa;
}

.hbar {
    width: 48px;
    height: 8px;
    border-radius: 4px;
    background-color: #c9ccd1;
}

/* status bar */
.statusbar {
    height: 24px;
    flex: none;
    display: flex;
    align-items: center;
    padding-left: 12px;
}

.pay {
    gap: 4px;
    margin-right: 13px;
}

.pay .tri {
    margin-left: 5px;
    border-bottom-color: #66728c;
}

.macro {
    margin: 0 12px;
}

.stats {
    display: flex;
    gap: 10px;
    margin-left: 8px;
}

.views {
    display: flex;
    align-items: center;
    gap: 8px;
    margin-left: auto;
    padding-right: 14px;
}

.view {
    width: 24px;
    height: 24px;
    justify-content: center;
}

.eye {
    margin-right: 4px;
}

.aim {
    width: 34px;
    gap: 4px;
    margin-right: 3px;
}

.view.on {
    background-color: #cfd1d5;
    border-radius: 4px;
}

.zoom {
    gap: 16px;
    margin: 0 8px 0 10px;
}

.views input {
    appearance: none;
    width: 106px;
    height: 2px;
    margin: 0 6px;
    background: linear-gradient(to right, #2b5fd9 28%, #b5b7bb 28%);
}

.views input::-webkit-slider-thumb {
    appearance: none;
    width: 10px;
    height: 10px;
    border-radius: 50%;
    border: 3px solid #fff;
    background-color: #888;
}

.full {
    margin-left: 10px;
}

/* site marks */
.tag-mark {
    position: absolute;
    left: 698px;
    top: 870px;
    display: flex;
    justify-content: space-between;
    width: 564px;
    height: 135px;
    padding: 0 9px 0 14px;
    background-color: rgba(255, 255, 255, 0.6);
}

.tag-cn {
    font-size: 59px;
    line-height: 78px;
    font-weight: 900;
    color: #ff2d2d;
}

.tag-url {
    font-family: "Liberation Serif", serif;
    font-size: 45px;
    line-height: 54px;
    color: #2c7ffc;
    -webkit-text-stroke: 1px #2c7ffc;
}

.tag-logo {
    width: 225px;
    border-radius: 30px;
    background-color: #2e80ff;
    color: #fff;
    font-family: "Noto Sans CJK SC", sans-serif;
    font-size: 108px;
    font-weight: bold;
    line-height: 116px;
    text-align: center;
}

.xz-mark {
    position: absolute;
    right: 10px;
    bottom: 8px;
    display: flex;
    align-items: center;
    gap: 1px;
    opacity: 0.85;
}

.xz-logo {
    width: 42px;
    height: 40px;
}

.xz-cn {
    font-size: 21px;
    line-height: 24px;
    font-weight: bold;
    color: #4a86c8;
}

.xz-url {
    font-family: "Liberation Sans", sans-serif;
    font-size: 16px;
    line-height: 18px;
    font-weight: bold;
    color: #4fb56a;
}

.arrows {
    position: absolute;
    left: 0;
    top: 0;
    width: 100%;
    height: 100%;
    z-index: 20;
    pointer-events: none;
    fill: #f80000;
    stroke: #f80000;
    stroke-width: 3;
}

.arrows g {
    filter: drop-shadow(2px 2px 2px rgba(0, 0, 0, 0.6));
}

.arrows use {
    stroke-width: 0;
}

.arrows .mouse {
    fill: #fff;
    stroke: #111827;
    stroke-width: 1;
}
```

FILE: script.js
```
var letters = 'ABCDEFGHIJKLMNOPQRST'.split('');
var widths = [69, 89, 69, 69, 69, 69, 69, 69, 69, 76, 69, 69, 69, 69, 103, 126, 69, 69, 69, 0];
var selectedCols = 16;
var selectedRows = 26;

var rows = [
    '编号 岗位 工号 姓名 性别 年龄 学历 省 市 考核成绩 等级 出勤天数 奖金 薪资 薪资是否达标',
    'A01 技术员 1 小王 女 28 本科 湖北省 武汉市 60 及格 20 0 4600',
    'A02 员工 24 郑二 女 24 本科 湖南省 长沙市 80 良好 21 200 3900',
    'A03 员工 2 小张 男 30 专科 山东省 青岛市 90 优秀 21 200 4100',
    'A04 技术员 3 陈一 女 22 本科 湖南省 长沙市 88 良好 21 200 4100',
    'A05 工程师 4 小G 女 30 硕士 吉林省 长春市 77 及格 21 0 6200',
    'A06 工程师 5 小F 女 22 专科 辽宁省 沈阳市 76 及格 21 0 6100',
    'A07 助工 6 小明 男 28 本科 江苏省 南京市 50 不及格 21 0 4900',
    'A08 员工 7 李四 男 36 本科 四川省 成都市 62 及格 22 0 3900',
    'A09 员工 8 小A 女 22 本科 湖北省 武汉市 66 及格 22 0 4100',
    'A10 员工 9 赵六 女 22 本科 吉林省 长春市 78 及格 22 0 4600',
    'A11 技术员 10 王五 女 33 硕士 四川省 成都市 89 良好 22 200 4300',
    'A12 员工 11 张三 女 25 专科 吉林省 长春市 99 优秀 22 200 5100',
    'A03 员工 12 小E 男 25 本科 吉林省 长春市 67 及格 22 0 4400',
    'A14 技术员 13 小D 女 36 硕士 四川省 成都市 78 及格 23 200 5100',
    'A15 技术员 14 杨十四 女 33 专科 湖北省 武汉市 99 优秀 23 200 5300',
    'A16 员工 15 小C 男 22 硕士 湖南省 长沙市 76 及格 23 200 5000',
    'A17 技术员 16 李六 女 28 硕士 辽宁省 沈阳市 85 良好 23 200 4300 FALSE 2023年9月24日',
    'A18 技术员 17 小B 男 22 专科 江苏省 南京市 66 及格 24 200 4600 FALSE 2023年9月25日',
    'A19 员工 18 冯十 男 28 专科 四川省 成都市 64 及格 24 200 5400 TRUE 2023年9月26日',
    'A20 技术员 19 吴九 女 22 硕士 福建省 厦门市 57 不及格 25 200 4600 FALSE 2023年9月27日',
    'A21 技术员 20 小红 男 26 专科 江苏省 南京市 78 及格 21 0 5900 TRUE 2023年9月28日',
    'A22 助工 21 孙七 男 30 本科 山东省 青岛市 88 良好 26 200 4900 FALSE 2023年9月29日',
    'A23 技术员 22 小李 男 22 硕士 山东省 青岛市 67 及格 26 200 6000 TRUE 2023年9月30日',
    'A24 工程师 23 小韦 男 36 硕士 福建省 厦门市 78 及格 28 200 10100 TRUE 2023年10月1日'
];

function buildGrid() {
    var cols = '<col style="width:16px">';
    var head = '<th></th>';
    letters.forEach(function (letter, i) {
        cols += widths[i] ? '<col style="width:' + widths[i] + 'px">' : '<col>';
        head += '<th class="' + (i < selectedCols ? 'in' : '') + '">' + letter + '</th>';
    });
    document.getElementById('cols').innerHTML = cols;
    document.getElementById('letters').innerHTML = head;

    var body = '';
    for (var r = 1; r <= 31; r++) {
        var inRow = r <= selectedRows;
        body += '<tr><th class="' + (inRow ? 'in' : '') + '">' + r + '</th>';
        var first = 0;
        if (r === 1) {
            body += '<td class="in heading" colspan="16">XXX公司员工信息</td>';
            first = selectedCols;
        }
        var values = r > 1 && rows[r - 2] ? rows[r - 2].split(' ') : [];
        for (var c = first; c < letters.length; c++) {
            body += '<td class="' + (inRow && c < selectedCols ? 'in' : '') + '">' + (values[c] || '') + '</td>';
        }
        body += '</tr>';
    }
    document.getElementById('cells').innerHTML = body;
}

// thumbnails
var BLUE = '#4472c4', MID = '#b4c6e7', LIGHT = '#d9e1f2', LINE = '#8ea9db';
var X = [0, 17, 34, 51, 68, 85];
var Y = [0, 10, 20, 29, 39, 49];

function rect(x, y, w, h, fill) {
    return '<rect x="' + x + '" y="' + y + '" width="' + w + '" height="' + h + '" fill="' + fill + '"/>';
}

function frame(w, h, color) {
    return rect(0, 0, w, 1, color) + rect(0, h - 1, w, 1, color) + rect(0, 0, 1, h, color) + rect(w - 1, 0, 1, h, color);
}

// fills: one string per row, b = blue, m = mid, l = light, . = none
function presetThumb(t) {
    var shade = { b: BLUE, m: MID, l: LIGHT };
    var out = '';
    var r, c, key;
    for (r = 0; r < 5; r++) {
        for (c = 0; c < 5; c++) {
            key = t.fills[r][c];
            if (shade[key]) {
                out += rect(X[c], Y[r], X[c + 1] - X[c], Y[r + 1] - Y[r], shade[key]);
            }
        }
    }
    (t.h || []).forEach(function (i) { out += rect(0, Math.min(Y[i], 48), 85, 1, t.hColor || BLUE); });
    (t.v || []).forEach(function (i) { out += rect(X[i], 0, 1, 49, t.vColor || LINE); });
    if (t.frame) {
        out += frame(85, 49, BLUE);
    }
    for (r = 0; r < 5; r++) {
        for (c = 0; c < 5; c++) {
            out += rect(X[c] + 3, Y[r] + 5, 11, 1, t.fills[r][c] === 'b' ? '#fff' : (t.dash || '#000'));
        }
    }
    return '<button class="thumb' + (t.chosen ? ' chosen' : '') + '"><svg viewBox="0 0 85 49">' + out + '</svg></button>';
}

function otherThumb(t) {
    var out = rect(0, 0, 84, 48, '#fff');
    var r, c;
    if (t.banded) {
        out += rect(0, 0, 84, 12, t.main) + rect(0, 12, 68, 12, t.soft) + rect(0, 36, 68, 12, t.soft) + rect(68, 12, 16, 36, t.side);
        out += '<g opacity=".5">' + rect(68, 0, 1, 48, t.main) + rect(0, 24, 84, 1, t.main) + rect(0, 36, 84, 1, t.main);
        for (c = 1; c < 4; c++) {
            out += rect(c * 17, 12, 1, 12, t.main) + rect(c * 17, 36, 1, 12, t.main);
        }
        out += '</g>';
    } else {
        out += '<g opacity=".4">' + rect(0, 12, 84, 1, t.main) + rect(0, 36, 84, 1, t.main);
        for (c = 1; c < 5; c++) {
            out += rect(c * 17 - 1, 0, 1, 48, t.main);
        }
        out += '</g>' + rect(17, 12, 16, 24, t.main) + rect(51, 12, 16, 24, t.main);
    }
    out += '<g opacity=".8">' + frame(84, 48, t.edge) + '</g>';
    'ABCDE'.split('').forEach(function (ch, i) {
        out += '<text x="' + (i * 17 + 8) + '" y="8" fill="' + (t.banded ? '#fff' : t.main) + '">' + ch + '</text>';
    });
    for (r = 1; r < 4; r++) {
        for (c = 0; c < 5; c++) {
            if (!t.banded && r === 3 && c === 0) {
                out += '<text x="8" y="44" fill="' + t.main + '">CB</text>';
            } else {
                out += rect(c * 17 + 4, r * 12 + 5, 8, 1, '#b3b3b3');
            }
        }
    }
    return '<button class="thumb"><svg viewBox="0 0 85 49">' + out + '</svg></button>';
}

var inner = [1, 2, 3, 4];

document.getElementById('recent-styles').innerHTML = [
    { fills: ['.....', 'lllll', '.....', 'lllll', '.....'], h: [0, 1, 5], dash: '#1f3864' },
    { fills: ['.....', 'lllll', '.....', 'lllll', '.....'], h: inner, hColor: LINE, v: inner, frame: true },
    { fills: ['bbbbb', 'lllll', '.....', 'lllll', '.....'], h: inner, frame: true, chosen: true },
    { fills: ['bbbbb', 'mmmmm', 'lllll', 'mmmmm', 'lllll'], h: inner, hColor: '#fff', v: inner, vColor: '#fff' }
].map(presetThumb).join('');

document.getElementById('preset-styles').innerHTML = [
    { fills: ['.....', '.....', '.....', '.....', '.....'] },
    { fills: ['mmmmm', 'lllll', 'mmmmm', 'lllll', 'mmmmm'], h: inner, hColor: LINE, v: inner, frame: true },
    { fills: ['bbbbb', '.....', '.....', '.....', 'bbbbb'], h: inner, frame: true },
    { fills: ['bbbbb', 'mmmmm', 'lllll', 'mmmmm', 'bbbbb'], h: inner, hColor: '#fff', v: inner, vColor: '#fff' },
    { fills: ['bbbbb', 'l....', 'l....', 'l....', 'l....'], frame: true },
    { fills: ['bbbbb', '....l', '....l', '....l', '....l'], frame: true },
    { fills: ['bllll', 'b....', 'bllll', 'b....', 'bllll'], h: inner, hColor: LINE, v: inner, frame: true },
    { fills: ['bbbbb', 'bllll', 'b....', 'bllll', 'b....'], h: inner, hColor: '#fff', v: inner, vColor: '#fff', frame: true }
].map(presetThumb).join('');

document.getElementById('other-styles').innerHTML = [
    { main: '#f8c56b', edge: '#dcc9a2' },
    { main: '#8bcbe8', edge: '#a9cddd' },
    { main: '#ea7878', edge: '#dca5a8' },
    { main: '#d585d8', edge: '#c9aed2' },
    { banded: true, main: '#9fe3a5', soft: '#e2f6e2', side: '#c4efc8', edge: '#86c98d' },
    { banded: true, main: '#9cc7ee', soft: '#e5f1fb', side: '#bfdcf5', edge: '#78a9d6' },
    { banded: true, main: '#f0a5b5', soft: '#f8e6ea', side: '#f8d0da', edge: '#d9899b' },
    { banded: true, main: '#f5bf92', soft: '#fcf0e6', side: '#f9dcc2', edge: '#d6a478' }
].map(otherThumb).join('');

buildGrid();
```
